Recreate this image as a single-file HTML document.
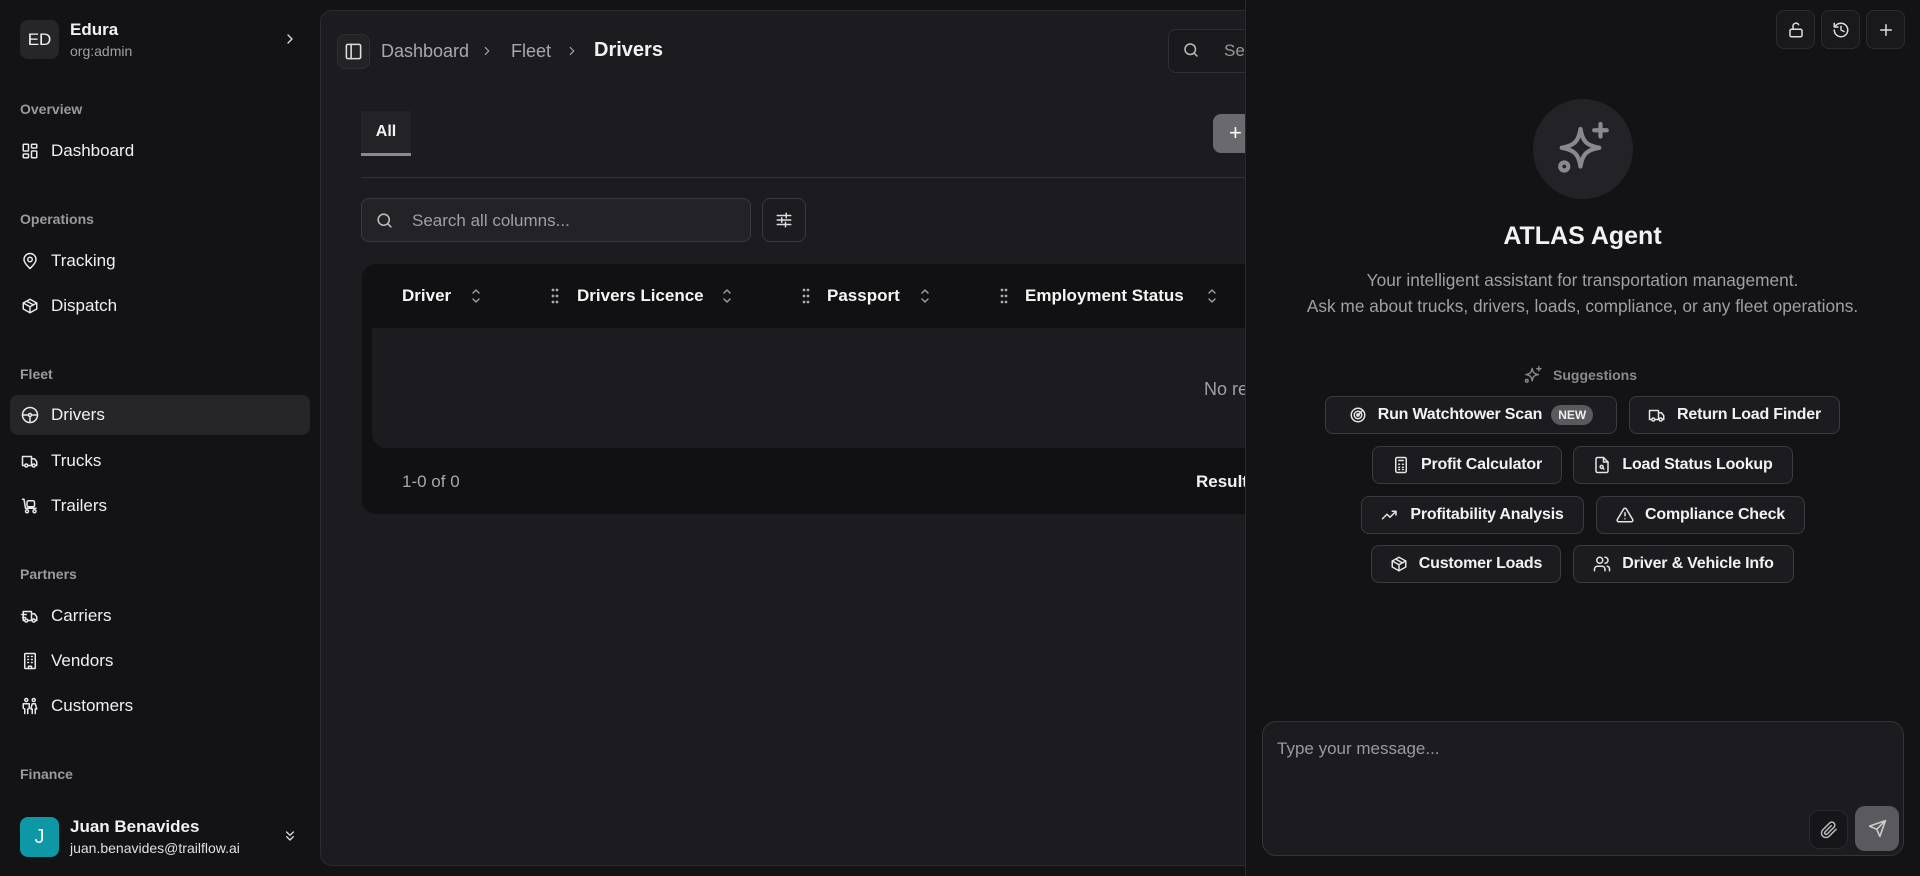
<!DOCTYPE html>
<html><head><meta charset="utf-8"><style>
*{box-sizing:border-box;margin:0;padding:0}
body{width:1920px;height:876px;background:#131316;font-family:"Liberation Sans",sans-serif;color:#f2f2f2;position:relative;overflow:hidden}
.a{position:absolute}
svg{fill:none;stroke:currentColor;stroke-width:2;stroke-linecap:round;stroke-linejoin:round}
.lbl{position:absolute;left:20px;font-size:14px;color:#9a9a9e;font-weight:600}
.nav{position:absolute;left:10px;width:300px;height:40px;border-radius:8px;display:flex;align-items:center;padding-left:11px;font-size:17px;color:#f0f0f0}
.nav svg{width:18px;height:18px;margin-right:12px;color:#e8e8e8}
.nav.act{background:#262629}
.main{position:absolute;left:320px;top:10px;width:1300px;height:856px;background:#1c1c20;border:1px solid #2c2c30;border-radius:12px}
.hd{position:absolute;top:264px;height:64px;display:flex;align-items:center;font-size:17px;font-weight:700;color:#f5f5f5}
.srt{position:absolute;top:287px;width:10px;height:18px;color:#9a9a9e}
.grip{position:absolute;top:288px;width:8px;height:16px}
.agent{position:absolute;left:1245px;top:0;width:675px;height:876px;background:#131316;border-left:1px solid #2a2a2e}
.tb{position:absolute;top:10px;width:39px;height:39px;border:1px solid #2c2c30;border-radius:8px;background:#19191c;display:flex;align-items:center;justify-content:center;color:#ddd}
.tb svg{width:18px;height:18px}
.chip{position:absolute;height:38px;border:1px solid #3a3a3f;border-radius:8px;background:#1c1c20;display:flex;align-items:center;justify-content:center;font-size:16px;font-weight:700;color:#f2f2f2;white-space:nowrap;letter-spacing:-0.2px}
.chip svg{width:18px;height:18px;margin-right:11px;color:#e5e5e5}
.spk path,.spk circle{stroke-width:1.7}
</style></head><body>
<!-- sidebar -->
<div class="a" style="left:20px;top:20px;width:39px;height:39px;border-radius:8px;background:#26262a;font-size:17px;display:flex;align-items:center;justify-content:center">ED</div>
<div class="a" style="left:70px;top:20px;font-size:17px;font-weight:700">Edura</div>
<div class="a" style="left:70px;top:43px;font-size:14px;color:#a0a0a4">org:admin</div>
<svg class="a" style="left:282px;top:31px;width:16px;height:16px;color:#ddd" viewBox="0 0 24 24"><path d="M9 6l6 6-6 6"/></svg>

<div class="lbl" style="top:101px">Overview</div>
<div class="nav" style="top:131px"><svg viewBox="0 0 24 24"><rect x="3" y="3" width="7" height="9" rx="1"/><rect x="14" y="3" width="7" height="5" rx="1"/><rect x="14" y="12" width="7" height="9" rx="1"/><rect x="3" y="16" width="7" height="5" rx="1"/></svg>Dashboard</div>
<div class="lbl" style="top:211px">Operations</div>
<div class="nav" style="top:241px"><svg viewBox="0 0 24 24"><path d="M20 10c0 5-8 12-8 12s-8-7-8-12a8 8 0 0116 0z"/><circle cx="12" cy="10" r="3"/></svg>Tracking</div>
<div class="nav" style="top:286px"><svg viewBox="0 0 24 24"><path d="M21 8l-9-5-9 5v8l9 5 9-5z"/><path d="M3 8l9 5 9-5M12 13v8M7.5 5.5l9 5"/></svg>Dispatch</div>
<div class="lbl" style="top:366px">Fleet</div>
<div class="nav act" style="top:395px"><svg viewBox="0 0 24 24"><circle cx="12" cy="12" r="10"/><circle cx="12" cy="12" r="2"/><path d="M14 12h8M2 12h8M12 14v8"/></svg>Drivers</div>
<div class="nav" style="top:441px"><svg viewBox="0 0 24 24"><path d="M14 18V6H2v12h2M15 18h-6M19 18h2v-5l-3-4h-4"/><circle cx="7" cy="18" r="2"/><circle cx="17" cy="18" r="2"/></svg>Trucks</div>
<div class="nav" style="top:486px"><svg viewBox="0 0 24 24"><path d="M2 3h2l2 12h14"/><rect x="8" y="5" width="10" height="8" rx="2"/><circle cx="8" cy="19" r="2"/><circle cx="18" cy="19" r="2"/></svg>Trailers</div>
<div class="lbl" style="top:566px">Partners</div>
<div class="nav" style="top:596px"><svg viewBox="0 0 24 24"><path d="M14 18V6H3v12h2M15 18h-6M19 18h2v-5l-3-4h-4M1 10h6M2 14h4"/><circle cx="7" cy="18" r="2"/><circle cx="17" cy="18" r="2"/></svg>Carriers</div>
<div class="nav" style="top:641px"><svg viewBox="0 0 24 24"><rect x="5" y="2" width="14" height="20" rx="1"/><path d="M9 6h1M14 6h1M9 10h1M14 10h1M9 14h1M14 14h1M10 22v-3h4v3"/></svg>Vendors</div>
<div class="nav" style="top:686px"><svg viewBox="0 0 24 24"><circle cx="7" cy="4" r="2"/><circle cx="17" cy="4" r="2"/><path d="M5 22v-6l-2-1V9h8v6l-2 1v6M15 22v-6h-2l2-7h4l2 7h-2v6"/></svg>Customers</div>
<div class="lbl" style="top:766px">Finance</div>
<div class="a" style="left:20px;top:817px;width:39px;height:40px;border-radius:8px;background:#0e97a5;font-size:20px;display:flex;align-items:center;justify-content:center">J</div>
<div class="a" style="left:70px;top:817px;font-size:17px;font-weight:700">Juan Benavides</div>
<div class="a" style="left:70px;top:840px;font-size:14px;color:#e0e0e0">juan.benavides@trailflow.ai</div>
<svg class="a" style="left:282px;top:828px;width:16px;height:16px;color:#ddd" viewBox="0 0 24 24"><path d="M7 6l5 5 5-5M7 13l5 5 5-5"/></svg>

<!-- main -->
<div class="main"></div>
<div class="a" style="left:337px;top:34px;width:33px;height:35px;border:1px solid #2e2e33;border-radius:8px;background:#232327;display:flex;align-items:center;justify-content:center"><svg style="width:19px;height:19px;color:#ddd" viewBox="0 0 24 24"><rect x="3" y="3" width="18" height="18" rx="2"/><path d="M9 3v18"/></svg></div>
<div class="a" style="left:381px;top:41px;font-size:18px;color:#a8a8ac">Dashboard</div>
<svg class="a" style="left:480px;top:44px;width:14px;height:14px;color:#aaa" viewBox="0 0 24 24"><path d="M9 6l6 6-6 6"/></svg>
<div class="a" style="left:511px;top:41px;font-size:18px;color:#a8a8ac">Fleet</div>
<svg class="a" style="left:565px;top:44px;width:14px;height:14px;color:#aaa" viewBox="0 0 24 24"><path d="M9 6l6 6-6 6"/></svg>
<div class="a" style="left:594px;top:39px;font-size:20px;font-weight:700">Drivers</div>
<div class="a" style="left:1168px;top:29px;width:120px;height:44px;border:1px solid #2e2e33;border-radius:8px;background:#1a1a1e"></div>
<svg class="a" style="left:1182px;top:41px;width:18px;height:18px;color:#bbb" viewBox="0 0 24 24"><circle cx="11" cy="11" r="7"/><path d="M20 20l-4-4"/></svg>
<div class="a" style="left:1224px;top:41px;font-size:17px;color:#999">Se</div>

<div class="a" style="left:361px;top:111px;width:50px;height:45px;background:#232327;border-bottom:3px solid #8a8a8e;font-size:16px;font-weight:700;display:flex;align-items:center;justify-content:center">All</div>
<div class="a" style="left:361px;top:177px;width:884px;height:1px;background:#333337"></div>
<div class="a" style="left:1213px;top:114px;width:40px;height:39px;border-radius:8px;background:#6a6a6e;color:#fff;font-size:22px;padding-left:16px;line-height:37px">+</div>

<div class="a" style="left:361px;top:198px;width:390px;height:44px;border:1px solid #38383d;border-radius:8px;background:#232327"></div>
<svg class="a" style="left:375px;top:211px;width:19px;height:19px;color:#bbb" viewBox="0 0 24 24"><circle cx="11" cy="11" r="7"/><path d="M20 20l-4-4"/></svg>
<div class="a" style="left:412px;top:211px;font-size:17px;color:#a0a0a4">Search all columns...</div>
<div class="a" style="left:762px;top:198px;width:44px;height:44px;border:1px solid #38383d;border-radius:8px;background:#1c1c20;display:flex;align-items:center;justify-content:center"><svg style="width:18px;height:18px;color:#ddd" viewBox="0 0 24 24"><path d="M3 6h18M3 12h18M3 18h18M15 3v6M9 9v6M14 15v6"/></svg></div>

<div class="a" style="left:362px;top:264px;width:900px;height:250px;background:#111113;border-radius:14px 0 0 14px"></div>
<div class="a" style="left:372px;top:328px;width:880px;height:120px;background:#1c1c20;border-radius:0 0 0 14px"></div>
<div class="hd" style="left:402px">Driver</div>
<svg class="srt" style="left:471px" viewBox="0 0 10 18"><path d="M2 6l3-3 3 3M2 12l3 3 3-3" stroke-width="1.5"/></svg>
<svg class="grip" style="left:551px" viewBox="0 0 8 16"><g fill="#aaa" stroke="none"><circle cx="2" cy="2" r="1.4"/><circle cx="6" cy="2" r="1.4"/><circle cx="2" cy="8" r="1.4"/><circle cx="6" cy="8" r="1.4"/><circle cx="2" cy="14" r="1.4"/><circle cx="6" cy="14" r="1.4"/></g></svg>
<div class="hd" style="left:577px">Drivers Licence</div>
<svg class="srt" style="left:722px" viewBox="0 0 10 18"><path d="M2 6l3-3 3 3M2 12l3 3 3-3" stroke-width="1.5"/></svg>
<svg class="grip" style="left:802px" viewBox="0 0 8 16"><g fill="#aaa" stroke="none"><circle cx="2" cy="2" r="1.4"/><circle cx="6" cy="2" r="1.4"/><circle cx="2" cy="8" r="1.4"/><circle cx="6" cy="8" r="1.4"/><circle cx="2" cy="14" r="1.4"/><circle cx="6" cy="14" r="1.4"/></g></svg>
<div class="hd" style="left:827px">Passport</div>
<svg class="srt" style="left:920px" viewBox="0 0 10 18"><path d="M2 6l3-3 3 3M2 12l3 3 3-3" stroke-width="1.5"/></svg>
<svg class="grip" style="left:1000px" viewBox="0 0 8 16"><g fill="#aaa" stroke="none"><circle cx="2" cy="2" r="1.4"/><circle cx="6" cy="2" r="1.4"/><circle cx="2" cy="8" r="1.4"/><circle cx="6" cy="8" r="1.4"/><circle cx="2" cy="14" r="1.4"/><circle cx="6" cy="14" r="1.4"/></g></svg>
<div class="hd" style="left:1025px">Employment Status</div>
<svg class="srt" style="left:1207px" viewBox="0 0 10 18"><path d="M2 6l3-3 3 3M2 12l3 3 3-3" stroke-width="1.5"/></svg>
<div class="a" style="left:1204px;top:379px;font-size:18px;color:#a0a0a4">No results</div>
<div class="a" style="left:402px;top:472px;font-size:17px;color:#a8a8ac">1-0 of 0</div>
<div class="a" style="left:1196px;top:472px;font-size:17px;font-weight:700">Results</div>

<!-- agent -->
<div class="agent"></div>
<div class="tb" style="left:1776px"><svg viewBox="0 0 24 24"><rect x="4" y="11" width="16" height="10" rx="2"/><path d="M8 11V7a4 4 0 017.5-2"/></svg></div>
<div class="tb" style="left:1821px"><svg viewBox="0 0 24 24"><path d="M3 12a9 9 0 109-9 9.7 9.7 0 00-6.7 2.7L3 8M3 3v5h5M12 7v5l4 2"/></svg></div>
<div class="tb" style="left:1866px"><svg viewBox="0 0 24 24"><path d="M12 5v14M5 12h14"/></svg></div>
<div class="a" style="left:1533px;top:99px;width:100px;height:100px;border-radius:50%;background:#232327"></div>
<svg class="a spk" style="left:1553px;top:119px;width:60px;height:60px;color:#8a8a8e" viewBox="0 0 24 24"><path d="M11 4c.8 5 2.5 6.6 7.5 7.5-5 .9-6.7 2.5-7.5 7.5-.8-5-2.5-6.6-7.5-7.5 5-.9 6.7-2.5 7.5-7.5z"/><path d="M19 2v5M16.5 4.5h5"/><circle cx="4.5" cy="19" r="1.6"/></svg>
<div class="a" style="left:1245px;width:675px;top:222px;text-align:center;font-size:25px;font-weight:700">ATLAS Agent</div>
<div class="a" style="left:1245px;width:675px;top:267px;text-align:center;font-size:17.3px;color:#a0a0a4;line-height:26px">Your intelligent assistant for transportation management.<br>Ask me about trucks, drivers, loads, compliance, or any fleet operations.</div>
<svg class="a spk" style="left:1523px;top:365px;width:20px;height:20px;color:#8a8a8e" viewBox="0 0 24 24"><path d="M11 4c.8 5 2.5 6.6 7.5 7.5-5 .9-6.7 2.5-7.5 7.5-.8-5-2.5-6.6-7.5-7.5 5-.9 6.7-2.5 7.5-7.5z"/><path d="M19 2v5M16.5 4.5h5"/><circle cx="4.5" cy="19" r="1.6"/></svg>
<div class="a" style="left:1553px;top:367px;font-size:14px;color:#8a8a8e;font-weight:600">Suggestions</div>

<div class="chip" style="left:1325px;top:396px;width:292px"><svg viewBox="0 0 24 24"><circle cx="12" cy="12" r="9"/><circle cx="12" cy="12" r="5"/><circle cx="12" cy="12" r="1.5"/><path d="M12 12l6-6"/></svg>Run Watchtower Scan<span style="margin-left:9px;background:#5a5a5e;border-radius:10px;font-size:12px;padding:3px 7px;color:#eee;letter-spacing:0">NEW</span></div>
<div class="chip" style="left:1629px;top:396px;width:211px"><svg viewBox="0 0 24 24"><path d="M14 18V6H2v12h2M15 18h-6M19 18h2v-5l-3-4h-4"/><circle cx="7" cy="18" r="2"/><circle cx="17" cy="18" r="2"/></svg>Return Load Finder</div>
<div class="chip" style="left:1372px;top:446px;width:190px"><svg viewBox="0 0 24 24"><rect x="5" y="2" width="14" height="20" rx="2"/><path d="M9 6h6M9 11h1M14 11h1M9 15h1M14 15h1M9 18h1M14 18h1"/></svg>Profit Calculator</div>
<div class="chip" style="left:1573px;top:446px;width:220px"><svg viewBox="0 0 24 24"><path d="M14 2H6a2 2 0 00-2 2v16a2 2 0 002 2h12a2 2 0 002-2V8z"/><path d="M14 2v6h6"/><circle cx="11.5" cy="14.5" r="2"/><path d="M13 16l1.5 1.5"/></svg>Load Status Lookup</div>
<div class="chip" style="left:1361px;top:496px;width:223px"><svg viewBox="0 0 24 24"><path d="M2 17l6-6 4 4 8-8M15 7h5v5"/></svg>Profitability Analysis</div>
<div class="chip" style="left:1596px;top:496px;width:209px"><svg viewBox="0 0 24 24"><path d="M10.3 3.9L1.8 18a2 2 0 001.7 3h17a2 2 0 001.7-3L13.7 3.9a2 2 0 00-3.4 0z"/><path d="M12 9v4M12 17h0"/></svg>Compliance Check</div>
<div class="chip" style="left:1371px;top:545px;width:190px"><svg viewBox="0 0 24 24"><path d="M21 8l-9-5-9 5v8l9 5 9-5z"/><path d="M3 8l9 5 9-5M12 13v8M7.5 5.5l9 5"/></svg>Customer Loads</div>
<div class="chip" style="left:1573px;top:545px;width:221px"><svg viewBox="0 0 24 24"><circle cx="9" cy="7" r="4"/><path d="M2 21v-2a4 4 0 014-4h6a4 4 0 014 4v2M16 3a4 4 0 010 8M22 21v-2a4 4 0 00-3-4"/></svg>Driver &amp; Vehicle Info</div>

<div class="a" style="left:1262px;top:721px;width:642px;height:135px;border:1px solid #333338;border-radius:14px;background:#1c1c20"></div>
<div class="a" style="left:1277px;top:739px;font-size:17px;color:#9a9a9e">Type your message...</div>
<div class="a" style="left:1809px;top:810px;width:39px;height:39px;border-radius:10px;background:#16161a;border:1px solid #2a2a2e;display:flex;align-items:center;justify-content:center"><svg style="width:18px;height:18px;color:#bbb" viewBox="0 0 24 24"><path d="M21.4 11.1l-9.2 9.2a6 6 0 01-8.5-8.5l9.2-9.2a4 4 0 015.7 5.7l-9.2 9.2a2 2 0 01-2.8-2.8l8.5-8.5"/></svg></div>
<div class="a" style="left:1855px;top:806px;width:44px;height:45px;border-radius:10px;background:#5a5a5e;display:flex;align-items:center;justify-content:center"><svg style="width:19px;height:19px;color:#ccc" viewBox="0 0 24 24"><path d="M22 2L11 13M22 2l-7 20-4-9-9-4z"/></svg></div>
</body></html>
